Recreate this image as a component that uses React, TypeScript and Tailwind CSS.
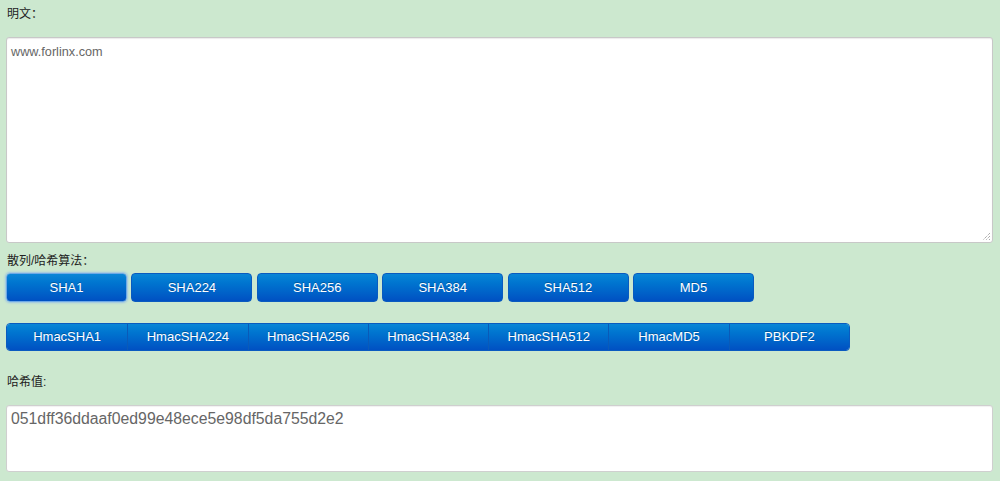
import React from "react";

const row1 = ["SHA1", "SHA224", "SHA256", "SHA384", "SHA512", "MD5"];
const row2 = ["HmacSHA1", "HmacSHA224", "HmacSHA256", "HmacSHA384", "HmacSHA512", "HmacMD5", "PBKDF2"];

export default function App() {
  return (
    <div
      className="w-[1000px] h-[481px] bg-[#cce8cf] overflow-hidden pl-[6px] pr-[7px] text-[12px] text-[#222]"
      style={{ fontFamily: '"Liberation Sans", Arial, "Noto Sans CJK SC", sans-serif' }}
    >
      <div className="h-[37px] pt-[6px] leading-[16px] pl-[1px]">明文：</div>
      <div className="relative h-[206px] bg-white border border-[#c8c8c8] rounded-[3px] shadow-[inset_0_1px_1px_rgba(0,0,0,0.08)] px-[4px] pt-[6px] text-[12.7px] text-[#666] leading-[16px]">
        www.forlinx.com
        <svg className="absolute right-[1px] bottom-[1px]" width="10" height="10" viewBox="0 0 10 10">
          <path d="M9 2 L2 9 M9 5 L5 9 M9 8 L8 9" stroke="#888" strokeWidth="1" strokeDasharray="1 1" />
        </svg>
      </div>
      <div className="h-[30px] pt-[10px] leading-[16px] pl-[1px]">散列/哈希算法：</div>
      <div className="flex gap-[4.4px]">
        {row1.map((t, i) => (
          <div
            key={t}
            className={
              "w-[121px] h-[29px] flex items-center justify-center rounded-[4px] bg-gradient-to-b from-[#0a86d6] to-[#0050c2] border text-white text-[13px] [text-shadow:0_-1px_0_rgba(0,0,0,0.25)] " +
              (i === 0 ? "border-[#6ea9e6] shadow-[0_0_2px_1px_rgba(120,170,240,0.6)]" : "border-[#0a5bc0]")
            }
          >
            {t}
          </div>
        ))}
      </div>
      <div className="mt-[21px] w-[844px] h-[28px] grid grid-cols-7 rounded-[4px] overflow-hidden border border-[#0a5bc0]">
        {row2.map((t, i) => (
          <div
            key={t}
            className={
              "flex items-center justify-center bg-gradient-to-b from-[#0a86d6] to-[#0050c2] text-white text-[13px] [text-shadow:0_-1px_0_rgba(0,0,0,0.25)] " +
              (i > 0 ? "border-l border-[#0a5ab8]" : "")
            }
          >
            {t}
          </div>
        ))}
      </div>
      <div className="h-[54px] pt-[23px] leading-[16px] pl-[1px]">哈希值:</div>
      <div className="h-[67px] bg-white border border-[#cfcfcf] rounded-[3px] shadow-[inset_0_1px_1px_rgba(0,0,0,0.06)] px-[4px] pt-[3px] text-[15.8px] text-[#666] leading-[20px]">
        051dff36ddaaf0ed99e48ece5e98df5da755d2e2
      </div>
    </div>
  );
}
